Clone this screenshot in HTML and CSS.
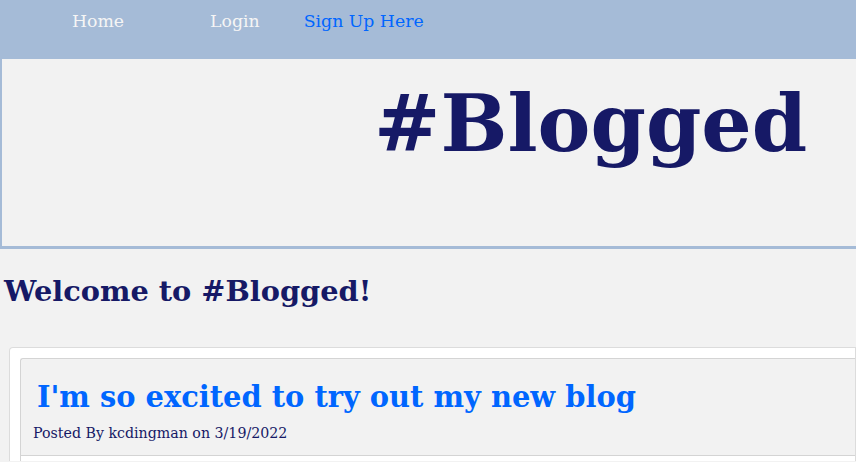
FILE: index.html
```html
<!DOCTYPE html>
<html>
<head>
<meta charset="utf-8">
<link rel="stylesheet" href="styles.css">
</head>
<body>
<nav class="nav">
  <a class="nav-link" href="#">Home</a>
  <a class="nav-link" href="#">Login</a>
  <a class="nav-link signup" href="#">Sign Up Here</a>
</nav>
<header class="banner">
  <h1 class="brand">#Blogged</h1>
</header>
<main class="main">
  <h2 class="welcome">Welcome to #Blogged!</h2>
  <div class="card">
    <div class="post">
      <div class="post-header">
        <h3 class="post-title">I'm so excited to try out my new blog</h3>
        <p class="post-meta">Posted By kcdingman on 3/19/2022</p>
      </div>
      <div class="post-body"></div>
    </div>
  </div>
</main>
</body>
</html>
```
FILE: styles.css
```css
html, body {
  margin: 0;
  padding: 0;
  background: #f2f2f2;
  font-family: "DejaVu Serif", serif;
}
.nav {
  height: 59px;
  background: #a5bbd7;
  display: flex;
  align-items: flex-start;
  padding-left: 72px;
  box-sizing: border-box;
}
.nav-link {
  font-size: 17.3px;
  color: #f5f5f5;
  text-decoration: none;
  line-height: 20px;
  margin-top: 11px;
  margin-right: 86px;
}
.nav-link:nth-child(2) { margin-right: 44px; }
.signup { color: #0066ff; }
.banner {
  height: 190px;
  box-sizing: border-box;
  border-left: 2px solid #a5bbd7;
  border-bottom: 3px solid #a5bbd7;
  display: flex;
  justify-content: flex-start;
  padding-left: 372px;
}
.brand {
  margin: 0;
  margin-top: 15px;
  font-size: 79.3px;
  line-height: 100px;
  color: #161966;
  font-weight: bold;
}
.welcome {
  margin: 20px 0 0 4px;
  font-size: 28.8px;
  line-height: 44px;
  color: #161966;
}
.card {
  margin: 34px 0 0 9px;
  background: #fff;
  border: 1px solid #dcdcdc;
  border-bottom: none;
  border-radius: 4px 0 0 0;
  padding: 10px 0 0 10px;
}
.post {
  border: 1px solid #d4d4d4;
  border-right: none;
  border-bottom: none;
  border-radius: 3px 0 0 0;
  background: #f2f2f2;
}
.post-header {
  padding: 16px 12px 12px 12px;
  border-bottom: 1px solid #d4d4d4;
}
.post-title {
  margin: 0 0 0 4px;
  font-size: 28.9px;
  line-height: 44px;
  color: #0066ff;
}
.post-meta {
  margin: 4px 0 0 0;
  font-size: 14.2px;
  line-height: 20px;
  color: #161966;
}
.post-body {
  background: #fff;
  height: 5px;
}
```
